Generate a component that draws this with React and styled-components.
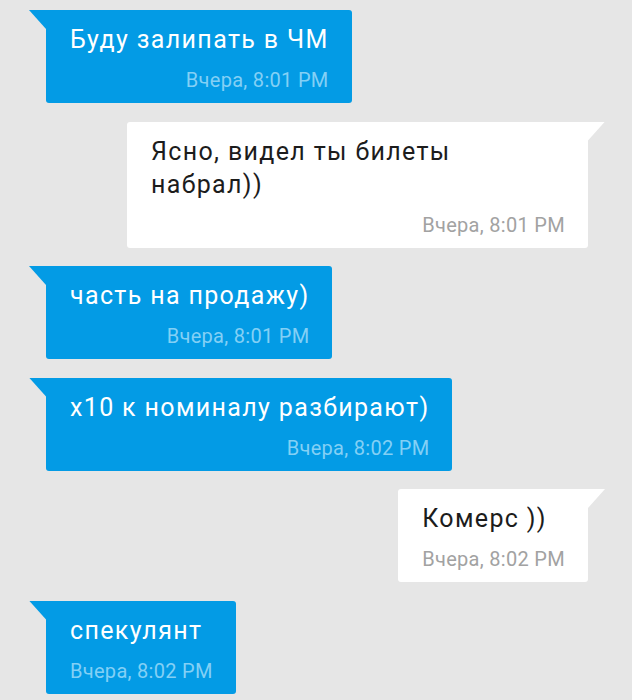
import React from 'react';
import styled, { createGlobalStyle } from 'styled-components';

const messages = [
  { id: 1, out: false, text: 'Буду залипать в ЧМ', time: 'Вчера, 8:01 PM' },
  { id: 2, out: true, text: 'Ясно, видел ты билеты набрал))', time: 'Вчера, 8:01 PM' },
  { id: 3, out: false, text: 'часть на продажу)', time: 'Вчера, 8:01 PM' },
  { id: 4, out: false, text: 'x10 к номиналу разбирают)', time: 'Вчера, 8:02 PM' },
  { id: 5, out: true, text: 'Комерс ))', time: 'Вчера, 8:02 PM' },
  { id: 6, out: false, text: 'спекулянт', time: 'Вчера, 8:02 PM' },
];

function App() {
  return (
    <>
      <GlobalStyle />
      <Chat>
        {messages.map((m) => (
          <Row key={m.id} $out={m.out}>
            <Bubble $out={m.out}>
              <Text $out={m.out}>{m.text}</Text>
              <Time $out={m.out}>{m.time}</Time>
            </Bubble>
            <Tail $out={m.out} />
          </Row>
        ))}
      </Chat>
    </>
  );
}

const GlobalStyle = createGlobalStyle`
  html, body {
    margin: 0;
    padding: 0;
    background: #e6e6e6;
  }
  body {
    font-family: Roboto, "Noto Sans", "Liberation Sans", sans-serif;
  }
`;

const Chat = styled.div`
  display: flex;
  flex-direction: column;
  gap: 18.5px;
  padding: 10px 27px 10px 29px;
  min-height: 700px;
  box-sizing: border-box;
  background: #e6e6e6;
`;

const Row = styled.div`
  display: flex;
  align-items: flex-start;
  flex-direction: ${(p) => (p.$out ? 'row' : 'row-reverse')};
  justify-content: ${(p) => (p.$out ? 'flex-start' : 'flex-end')};
  align-self: ${(p) => (p.$out ? 'flex-end' : 'flex-start')};
`;

const Tail = styled.div`
  width: 17px;
  height: 19px;
  flex-shrink: 0;
  background: ${(p) => (p.$out ? '#ffffff' : '#039be5')};
  clip-path: ${(p) =>
    p.$out
      ? 'polygon(0 0, 100% 0, 0 100%)'
      : 'polygon(0 0, 100% 0, 100% 100%)'};
`;

const Bubble = styled.div`
  display: flex;
  flex-direction: column;
  max-width: 414px;
  padding: 13px 23px 12px 24px;
  background: ${(p) => (p.$out ? '#ffffff' : '#039be5')};
  border-radius: ${(p) => (p.$out ? '3px 0 3px 3px' : '0 3px 3px 3px')};
`;

const Text = styled.div`
  font-size: 25px;
  letter-spacing: 1.35px;
  line-height: 33px;
  color: ${(p) => (p.$out ? '#1c1c1c' : '#ffffff')};
`;

const Time = styled.div`
  align-self: flex-end;
  margin-top: 13px;
  font-size: 20px;
  letter-spacing: 0.3px;
  line-height: 22px;
  color: ${(p) => (p.$out ? '#a2a2a2' : '#83d0f5')};
`;

export default App;
